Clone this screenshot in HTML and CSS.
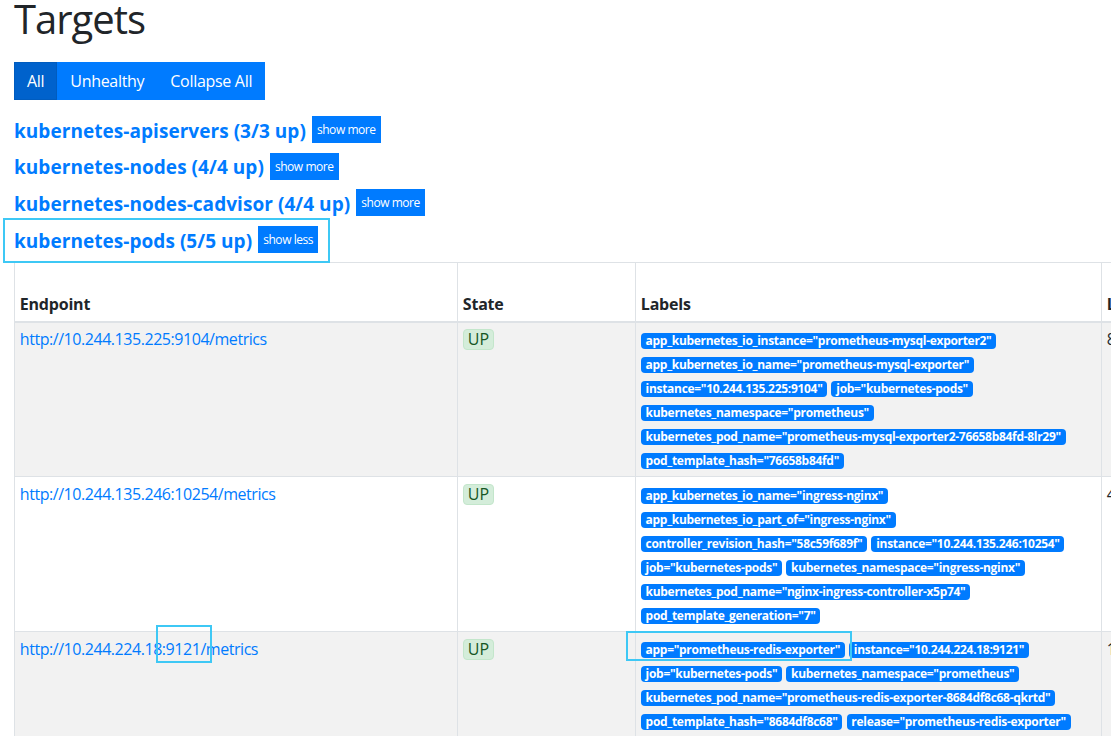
FILE: index.html
```html
<!DOCTYPE html>
<html lang="en">
<head>
<meta charset="utf-8">
<title>Targets</title>
<link rel="stylesheet" href="styles.css">
</head>
<body>
<div class="page">
  <h1 class="title">Targets</h1>
  <div class="btn-group">
    <button class="btn active">All</button>
    <button class="btn">Unhealthy</button>
    <button class="btn">Collapse All</button>
  </div>

  <div class="jobs">
    <div class="job"><a class="job-link" href="#">kubernetes-apiservers (3/3 up)</a><button class="btn-xs">show more</button></div>
    <div class="job"><a class="job-link" href="#">kubernetes-nodes (4/4 up)</a><button class="btn-xs">show more</button></div>
    <div class="job"><a class="job-link" href="#">kubernetes-nodes-cadvisor (4/4 up)</a><button class="btn-xs">show more</button></div>
    <div class="job"><a class="job-link" href="#">kubernetes-pods (5/5 up)</a><button class="btn-xs">show less</button></div>
  </div>

  <table class="targets">
    <colgroup>
      <col class="c-endpoint">
      <col class="c-state">
      <col class="c-labels">
      <col class="c-last">
      <col class="c-duration">
      <col class="c-error">
    </colgroup>
    <thead>
      <tr>
        <th>Endpoint</th>
        <th>State</th>
        <th>Labels</th>
        <th>Last Scrape</th>
        <th>Scrape Duration</th>
        <th>Error</th>
      </tr>
    </thead>
    <tbody>
      <tr>
        <td><a class="endpoint" href="#">http://10.244.135.225:9104/metrics</a></td>
        <td><span class="state-up">UP</span></td>
        <td class="labels">
          <span class="badge">app_kubernetes_io_instance="prometheus-mysql-exporter2"</span>
          <span class="badge">app_kubernetes_io_name="prometheus-mysql-exporter"</span>
          <span class="badge">instance="10.244.135.225:9104"</span>
          <span class="badge">job="kubernetes-pods"</span>
          <span class="badge">kubernetes_namespace="prometheus"</span>
          <span class="badge">kubernetes_pod_name="prometheus-mysql-exporter2-76658b84fd-8lr29"</span>
          <span class="badge">pod_template_hash="76658b84fd"</span>
        </td>
        <td>8.512s ago</td>
        <td>12.43ms</td>
        <td></td>
      </tr>
      <tr>
        <td><a class="endpoint" href="#">http://10.244.135.246:10254/metrics</a></td>
        <td><span class="state-up">UP</span></td>
        <td class="labels">
          <span class="badge">app_kubernetes_io_name="ingress-nginx"</span>
          <span class="badge">app_kubernetes_io_part_of="ingress-nginx"</span>
          <span class="badge">controller_revision_hash="58c59f689f"</span>
          <span class="badge">instance="10.244.135.246:10254"</span>
          <span class="badge">job="kubernetes-pods"</span>
          <span class="badge">kubernetes_namespace="ingress-nginx"</span>
          <span class="badge">kubernetes_pod_name="nginx-ingress-controller-x5p74"</span>
          <span class="badge">pod_template_generation="7"</span>
        </td>
        <td>4.377s ago</td>
        <td>20.81ms</td>
        <td></td>
      </tr>
      <tr>
        <td><a class="endpoint" href="#">http://10.244.224.18:9121/metrics</a></td>
        <td><span class="state-up">UP</span></td>
        <td class="labels">
          <span class="badge">app="prometheus-redis-exporter"</span>
          <span class="badge">instance="10.244.224.18:9121"</span>
          <span class="badge">job="kubernetes-pods"</span>
          <span class="badge">kubernetes_namespace="prometheus"</span>
          <span class="badge">kubernetes_pod_name="prometheus-redis-exporter-8684df8c68-qkrtd"</span>
          <span class="badge">pod_template_hash="8684df8c68"</span>
          <span class="badge">release="prometheus-redis-exporter"</span>
        </td>
        <td>1.934s ago</td>
        <td>5.102ms</td>
        <td></td>
      </tr>
    </tbody>
  </table>
</div>

<div class="mark mark-job"></div>
<div class="mark mark-port"></div>
<div class="mark mark-label"></div>
</body>
</html>
```

FILE: styles.css
```css
html {
  overflow: hidden;
}

body {
  margin: 0;
  font-family: "Open Sans", "Noto Sans", sans-serif;
  font-size: 16px;
  line-height: 1.5;
  color: #212529;
  background: #fff;
}

.page {
  padding: 0 14px;
}

.title {
  margin: 0 0 24px;
  font-size: 40px;
  font-weight: 500;
  line-height: 38px;
  padding-top: 1px;
  margin-top: -1px;
  letter-spacing: -1px;
}

.btn-group {
  display: flex;
}

.btn {
  font-family: inherit;
  font-size: 16px;
  line-height: 24px;
  padding: 6px 12px;
  border: 1px solid #007bff;
  background: #007bff;
  color: #fff;
  border-radius: 0;
  margin: 0;
  letter-spacing: -0.3px;
}

.btn.active {
  background: #0062cc;
  border-color: #005cbf;
}

.jobs {
  margin-top: 16px;
}

.job {
  display: flex;
  align-items: center;
  height: 27px;
  margin-bottom: 9.7px;
}

.job-link {
  color: #007bff;
  text-decoration: none;
  font-weight: 700;
  font-size: 19px;
  line-height: 24px;
  letter-spacing: 0.05px;
  padding-top: 2px;
}

.btn-xs {
  margin-left: 6px;
  font-family: inherit;
  font-size: 12px;
  line-height: 17px;
  padding: 4px 4px;
  border: 1px solid #007bff;
  background: #007bff;
  color: #fff;
  border-radius: 0;
  letter-spacing: -0.45px;
}

.targets {
  border-collapse: collapse;
  table-layout: fixed;
  width: 1600px;
  margin-top: -0.7px;
}

.c-endpoint { width: 443px; }
.c-state { width: 178px; }
.c-labels { width: 466px; }
.c-last { width: 150px; }
.c-duration { width: 90px; }
.c-error { width: 273px; }

.targets th,
.targets td {
  border: 1px solid #dee2e6;
  padding: 4.8px;
  text-align: left;
  vertical-align: top;
}

.targets th {
  vertical-align: bottom;
  border-bottom-width: 2px;
  font-weight: 700;
  letter-spacing: -0.2px;
}

.targets tbody tr:nth-child(odd) {
  background: #f2f2f2;
}

.endpoint {
  color: #007bff;
  text-decoration: none;
  letter-spacing: -0.45px;
}

.state-up {
  display: inline-block;
  padding: 0 4px;
  line-height: 19px;
  margin-top: 1px;
  background: #d4edda;
  border: 1px solid #c3e6cb;
  color: #155724;
  border-radius: 4px;
}

.badge {
  display: inline-block;
  padding: 2px 4.8px;
  font-size: 12px;
  font-weight: 700;
  line-height: 12px;
  color: #fff;
  background: #007bff;
  border-radius: 4px;
  white-space: nowrap;
  vertical-align: middle;
  letter-spacing: -0.3px;
}

.mark {
  position: absolute;
  box-sizing: border-box;
  border: 2px solid #3ec8f5;
}

.mark-job {
  left: 3px;
  top: 218px;
  width: 327px;
  height: 45px;
}

.mark-port {
  left: 156px;
  top: 625px;
  width: 56px;
  height: 38px;
}

.mark-label {
  left: 626px;
  top: 631px;
  width: 226px;
  height: 30px;
}
```
